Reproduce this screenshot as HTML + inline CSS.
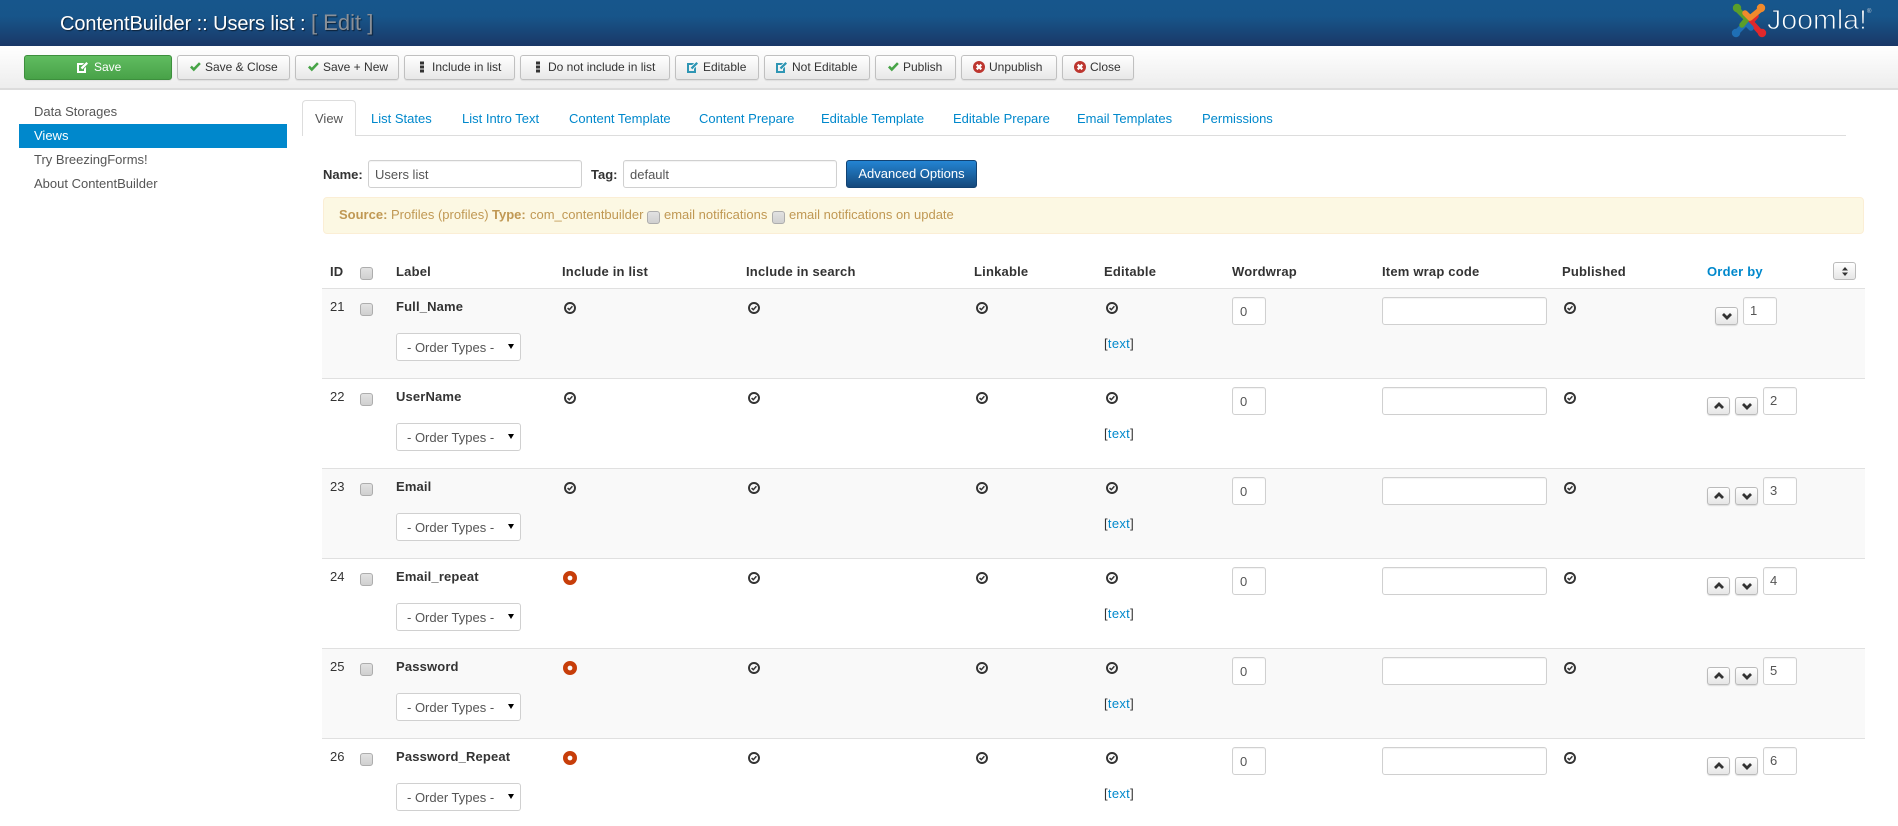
<!DOCTYPE html>
<html lang="en"><head><meta charset="utf-8"><title>ContentBuilder :: Users list</title>
<style>
*{box-sizing:border-box}
html,body{margin:0;padding:0;width:1898px;height:826px;overflow:hidden;background:#fff}
body{font:13px/18px "Liberation Sans",Arial,sans-serif;color:#333;position:relative}
.a,.a>*{position:absolute}
span.t,b.t{position:absolute;white-space:nowrap}
#hd{left:0;top:0;width:1898px;height:46px;background:linear-gradient(#17568c 0,#17558a 35%,#1a3867 100%)}
#title{left:60px;top:11px;font-size:20px;line-height:24px;letter-spacing:-.08px;color:#fff;text-shadow:1px 1px 1px rgba(0,0,0,.55);white-space:nowrap}
#title i{font-style:normal;font-size:22px;letter-spacing:0;color:#8a9098}
#tb{left:0;top:46px;width:1898px;height:44px;background:linear-gradient(#fff,#ededed);border-bottom:2px solid #dcdcdc}
.btn{position:absolute;top:55px;height:25px;border:1px solid #c0c0c0;border-radius:3px;background:linear-gradient(#fff,#e8e8e8);box-shadow:0 1px 1px rgba(0,0,0,.08)}
.bl{position:absolute;top:58px;font-size:12px;line-height:18px;color:#333;white-space:nowrap}
.ic{position:absolute;top:61px}
#save{left:24px;width:148px;background:linear-gradient(#60bc60,#48a248);border-color:#3d8f3d}
.side{position:absolute;left:19px;width:268px;height:24px;line-height:24px;padding-left:15px;color:#555}
.side.on{background:#0088cc;color:#fff}
#tabline{position:absolute;left:302px;top:135px;width:1544px;height:1px;background:#ddd}
#tabv{position:absolute;left:302px;top:100px;width:54px;height:36px;background:#fff;border:1px solid #ddd;border-bottom:0;border-radius:4px 4px 0 0;color:#555;padding:9px 0 0 12px}
.tab{position:absolute;top:110px;color:#0088cc;white-space:nowrap}
.inp{position:absolute;background:#fff;border:1px solid #d0d0d0;border-radius:3px;color:#555;height:28px;box-shadow:inset 0 1px 1px rgba(0,0,0,.05);white-space:nowrap}
.cb{position:absolute;width:13px;height:13px;border:1px solid #adadad;border-radius:3px;background:linear-gradient(#e2e2e2,#d0d0d0)}
#alert{position:absolute;left:323px;top:197px;width:1541px;height:37px;background:#fcf8e3;border:1px solid #fbeed5;border-radius:4px}
.al{position:absolute;top:206px;color:#c09853;white-space:nowrap}
.h{position:absolute;top:263px;font-weight:bold;letter-spacing:.2px;white-space:nowrap}
.row{position:absolute;left:0;width:1865px;height:90px}
.row::before{content:"";position:absolute;left:322px;right:0;top:0;bottom:0;border-top:1px solid #e0e0e0}
.row.g::before{background:#f9f9f9}
.row>*{position:absolute}
.id{left:330px;top:10px}
.row .cb{left:360px;top:15px}
.lb{left:396px;top:10px;font-weight:bold;letter-spacing:.15px;white-space:nowrap}
.sel{left:396px;top:45px;width:125px;height:28px;background:#fff;border:1px solid #d0d0d0;border-radius:3px;color:#555;padding:5px 0 0 10px;white-space:nowrap}
.sel::after{content:"";position:absolute;left:111px;top:10px;border:3px solid transparent;border-top:5px solid #000;border-bottom:0}
.i{top:14px;width:12px;height:12px}
.r{top:13px;width:14px;height:14px}
.tx{left:1104px;top:47px;color:#333;letter-spacing:.3px;white-space:nowrap}
.tx a{color:#0088cc;text-decoration:none}
.w{left:1232px;top:9px;width:34px;height:28px;padding:5px 0 0 7px}
.c{left:1382px;top:9px;width:165px;height:28px}
.o{top:9px;width:34px;height:28px;padding:4px 0 0 6px}
.m{top:19px;width:23px;height:18px;border:1px solid #bbb;border-radius:3px;background:linear-gradient(#fff,#e6e6e6);box-shadow:0 1px 1px rgba(0,0,0,.12)}
.m svg{position:absolute;left:5px;top:2px}
</style></head><body>
<svg width="0" height="0" style="position:absolute"><defs>
<symbol id="k" viewBox="0 0 12 12"><circle cx="6" cy="6" r="5" fill="none" stroke="#333" stroke-width="1.9"/><path d="M3.600 6.100 5.300 7.700 8.400 4.200" fill="none" stroke="#333" stroke-width="1.500"/></symbol>
<symbol id="v" viewBox="0 0 12 12"><path d="M1 6.500 2.800 4.600 4.800 6.600 10 1.200 11.800 3 4.800 10.400z" fill="#47a447"/></symbol>
<symbol id="e" viewBox="0 0 12 12"><path d="M1 3h7v8H1zM1 11" fill="none" stroke="#2f96b4" stroke-width="2"/><path d="M4.500 7.500 10 2" stroke="#fff" stroke-width="4"/><path d="M4.500 7.500 10.200 1.800" stroke="#2f96b4" stroke-width="2.400"/></symbol>
<symbol id="x" viewBox="0 0 12 12"><circle cx="6" cy="6" r="6" fill="#bd362f"/><path d="M3.700 3.700 8.300 8.300M8.300 3.700 3.700 8.300" stroke="#fff" stroke-width="2.200"/></symbol>
<symbol id="w" viewBox="0 0 12 12"><path d="M2 8 6 4 10 8" fill="none" stroke="#333" stroke-width="2.800"/></symbol>
<symbol id="d" viewBox="0 0 12 12"><path d="M2 4 6 8 10 4" fill="none" stroke="#333" stroke-width="2.800"/></symbol>
<symbol id="r" viewBox="0 0 14 14"><circle cx="7" cy="7" r="4.700" fill="none" stroke="#c73e0a" stroke-width="4.600"/></symbol>
</defs></svg>

<div class="a" id="hd"></div>
<div class="a"><div id="title">ContentBuilder :: Users list : <i>[ Edit ]</i></div></div>
<svg style="position:absolute;left:1730px;top:2px" width="160" height="38" viewBox="0 0 160 38">
<g fill="none" stroke-width="5.500" stroke-linecap="round" stroke-linejoin="round">
<path d="M31 31 21 20 26 14" stroke="#e0282c"/>
<path d="M6 31 16 21 21 26" stroke="#1f6fb5"/>
<path d="M7 7 17 17 12 23" stroke="#5a9e2a"/>
<path d="M31 7 20 16 15 11" stroke="#f08a2c"/>
</g>
<circle cx="7" cy="6" r="4.200" fill="#5a9e2a"/><circle cx="31" cy="6" r="4.200" fill="#f08a2c"/><circle cx="6" cy="31" r="4.200" fill="#1f6fb5"/><circle cx="32" cy="31" r="4.200" fill="#e0282c"/>
<text x="37" y="27" font-family="Liberation Sans" font-size="28" fill="#fff" stroke="#174e80" stroke-width=".9" textLength="100" lengthAdjust="spacingAndGlyphs">Joomla!</text>
<text x="137" y="11" font-family="Liberation Sans" font-size="6" fill="#c5ccd6">®</text>
</svg>
<div class="a" id="tb"></div>

<div class="btn" id="save"></div>
<svg class="ic" style="left:77px" width="12" height="12" viewBox="0 0 12 12"><path d="M1 3h7v8H1z" fill="none" stroke="#fff" stroke-width="2"/><path d="M4.500 7.500 10 2" stroke="#52ab52" stroke-width="4"/><path d="M4.500 7.500 10.200 1.800" stroke="#fff" stroke-width="2.400"/></svg>
<span class="bl" style="left:94px;color:#fff">Save</span>

<div class="btn" style="left:177px;width:113px"></div><svg class="ic" style="left:189px" width="12" height="12"><use href="#v"/></svg><span class="bl" style="left:205px">Save &amp; Close</span>
<div class="btn" style="left:295px;width:104px"></div><svg class="ic" style="left:307px" width="12" height="12"><use href="#v"/></svg><span class="bl" style="left:323px">Save + New</span>
<div class="btn" style="left:404px;width:111px"></div><svg class="ic" style="left:420px" width="4" height="12"><path d="M0 .5h4v3H0zM0 4.500h4v3H0zM0 8.500h4v3H0z" fill="#333"/></svg><span class="bl" style="left:432px">Include in list</span>
<div class="btn" style="left:520px;width:150px"></div><svg class="ic" style="left:536px" width="4" height="12"><path d="M0 .5h4v3H0zM0 4.500h4v3H0zM0 8.500h4v3H0z" fill="#333"/></svg><span class="bl" style="left:548px">Do not include in list</span>
<div class="btn" style="left:675px;width:84px"></div><svg class="ic" style="left:687px" width="12" height="12"><use href="#e"/></svg><span class="bl" style="left:703px">Editable</span>
<div class="btn" style="left:764px;width:106px"></div><svg class="ic" style="left:776px" width="12" height="12"><use href="#e"/></svg><span class="bl" style="left:792px">Not Editable</span>
<div class="btn" style="left:875px;width:81px"></div><svg class="ic" style="left:887px" width="12" height="12"><use href="#v"/></svg><span class="bl" style="left:903px">Publish</span>
<div class="btn" style="left:961px;width:96px"></div><svg class="ic" style="left:973px" width="12" height="12"><use href="#x"/></svg><span class="bl" style="left:989px">Unpublish</span>
<div class="btn" style="left:1062px;width:72px"></div><svg class="ic" style="left:1074px" width="12" height="12"><use href="#x"/></svg><span class="bl" style="left:1090px">Close</span>

<div class="side" style="top:100px">Data Storages</div>
<div class="side on" style="top:124px">Views</div>
<div class="side" style="top:148px">Try BreezingForms!</div>
<div class="side" style="top:172px">About ContentBuilder</div>

<div id="tabline"></div>
<div id="tabv">View</div>
<span class="tab" style="left:371px">List States</span>
<span class="tab" style="left:462px">List Intro Text</span>
<span class="tab" style="left:569px">Content Template</span>
<span class="tab" style="left:699px">Content Prepare</span>
<span class="tab" style="left:821px">Editable Template</span>
<span class="tab" style="left:953px">Editable Prepare</span>
<span class="tab" style="left:1077px">Email Templates</span>
<span class="tab" style="left:1202px">Permissions</span>

<b class="t" style="left:323px;top:166px">Name:</b>
<div class="inp" style="left:368px;top:160px;width:214px;padding:5px 0 0 6px">Users list</div>
<b class="t" style="left:591px;top:166px">Tag:</b>
<div class="inp" style="left:623px;top:160px;width:214px;padding:5px 0 0 6px">default</div>
<div style="position:absolute;left:846px;top:160px;width:131px;height:28px;border:1px solid #124272;border-radius:3px;background:linear-gradient(#2384d3,#15497c);color:#fff;text-align:center;line-height:26px;white-space:nowrap">Advanced Options</div>

<div id="alert"></div>
<b class="al" style="left:339px">Source:</b><span class="al" style="left:391px">Profiles (profiles)</span>
<b class="al" style="left:492px">Type:</b><span class="al" style="left:530px">com_contentbuilder</span>
<div class="cb" style="left:647px;top:211px"></div><span class="al" style="left:664px">email notifications</span>
<div class="cb" style="left:772px;top:211px"></div><span class="al" style="left:789px">email notifications on update</span>

<b class="h" style="left:330px">ID</b><div class="cb" style="left:360px;top:267px"></div>
<b class="h" style="left:396px">Label</b>
<b class="h" style="left:562px">Include in list</b>
<b class="h" style="left:746px">Include in search</b>
<b class="h" style="left:974px">Linkable</b>
<b class="h" style="left:1104px">Editable</b>
<b class="h" style="left:1232px">Wordwrap</b>
<b class="h" style="left:1382px">Item wrap code</b>
<b class="h" style="left:1562px">Published</b>
<b class="h" style="left:1707px;color:#0088cc">Order by</b>
<div style="position:absolute;left:1833px;top:262px;width:23px;height:18px;border:1px solid #bbb;border-radius:3px;background:linear-gradient(#fff,#e6e6e6)"><svg style="position:absolute;left:8px;top:3px" width="6" height="11"><path d="M3 1 6 4.500H0zM3 10 6 6.500H0z" fill="#333"/></svg></div>

<div class="row g" style="top:288px"><span class="id">21</span><div class="cb"></div><span class="lb">Full_Name</span><div class="sel">- Order Types -</div>
<svg class="i" style="left:564px"><use href="#k"/></svg><svg class="i" style="left:748px"><use href="#k"/></svg><svg class="i" style="left:976px"><use href="#k"/></svg><svg class="i" style="left:1106px"><use href="#k"/></svg><svg class="i" style="left:1564px"><use href="#k"/></svg>
<span class="tx">[<a>text</a>]</span><div class="inp w">0</div><div class="inp c"></div>
<div class="m" style="left:1715px"><svg width="12" height="12"><use href="#d"/></svg></div><div class="inp o" style="left:1743px">1</div></div>

<div class="row" style="top:378px"><span class="id">22</span><div class="cb"></div><span class="lb">UserName</span><div class="sel">- Order Types -</div>
<svg class="i" style="left:564px"><use href="#k"/></svg><svg class="i" style="left:748px"><use href="#k"/></svg><svg class="i" style="left:976px"><use href="#k"/></svg><svg class="i" style="left:1106px"><use href="#k"/></svg><svg class="i" style="left:1564px"><use href="#k"/></svg>
<span class="tx">[<a>text</a>]</span><div class="inp w">0</div><div class="inp c"></div>
<div class="m" style="left:1707px"><svg width="12" height="12"><use href="#w"/></svg></div><div class="m" style="left:1735px"><svg width="12" height="12"><use href="#d"/></svg></div><div class="inp o" style="left:1763px">2</div></div>

<div class="row g" style="top:468px"><span class="id">23</span><div class="cb"></div><span class="lb">Email</span><div class="sel">- Order Types -</div>
<svg class="i" style="left:564px"><use href="#k"/></svg><svg class="i" style="left:748px"><use href="#k"/></svg><svg class="i" style="left:976px"><use href="#k"/></svg><svg class="i" style="left:1106px"><use href="#k"/></svg><svg class="i" style="left:1564px"><use href="#k"/></svg>
<span class="tx">[<a>text</a>]</span><div class="inp w">0</div><div class="inp c"></div>
<div class="m" style="left:1707px"><svg width="12" height="12"><use href="#w"/></svg></div><div class="m" style="left:1735px"><svg width="12" height="12"><use href="#d"/></svg></div><div class="inp o" style="left:1763px">3</div></div>

<div class="row" style="top:558px"><span class="id">24</span><div class="cb"></div><span class="lb">Email_repeat</span><div class="sel">- Order Types -</div>
<svg class="r" style="left:563px"><use href="#r"/></svg><svg class="i" style="left:748px"><use href="#k"/></svg><svg class="i" style="left:976px"><use href="#k"/></svg><svg class="i" style="left:1106px"><use href="#k"/></svg><svg class="i" style="left:1564px"><use href="#k"/></svg>
<span class="tx">[<a>text</a>]</span><div class="inp w">0</div><div class="inp c"></div>
<div class="m" style="left:1707px"><svg width="12" height="12"><use href="#w"/></svg></div><div class="m" style="left:1735px"><svg width="12" height="12"><use href="#d"/></svg></div><div class="inp o" style="left:1763px">4</div></div>

<div class="row g" style="top:648px"><span class="id">25</span><div class="cb"></div><span class="lb">Password</span><div class="sel">- Order Types -</div>
<svg class="r" style="left:563px"><use href="#r"/></svg><svg class="i" style="left:748px"><use href="#k"/></svg><svg class="i" style="left:976px"><use href="#k"/></svg><svg class="i" style="left:1106px"><use href="#k"/></svg><svg class="i" style="left:1564px"><use href="#k"/></svg>
<span class="tx">[<a>text</a>]</span><div class="inp w">0</div><div class="inp c"></div>
<div class="m" style="left:1707px"><svg width="12" height="12"><use href="#w"/></svg></div><div class="m" style="left:1735px"><svg width="12" height="12"><use href="#d"/></svg></div><div class="inp o" style="left:1763px">5</div></div>

<div class="row" style="top:738px"><span class="id">26</span><div class="cb"></div><span class="lb">Password_Repeat</span><div class="sel">- Order Types -</div>
<svg class="r" style="left:563px"><use href="#r"/></svg><svg class="i" style="left:748px"><use href="#k"/></svg><svg class="i" style="left:976px"><use href="#k"/></svg><svg class="i" style="left:1106px"><use href="#k"/></svg><svg class="i" style="left:1564px"><use href="#k"/></svg>
<span class="tx">[<a>text</a>]</span><div class="inp w">0</div><div class="inp c"></div>
<div class="m" style="left:1707px"><svg width="12" height="12"><use href="#w"/></svg></div><div class="m" style="left:1735px"><svg width="12" height="12"><use href="#d"/></svg></div><div class="inp o" style="left:1763px">6</div></div>
</body></html>
